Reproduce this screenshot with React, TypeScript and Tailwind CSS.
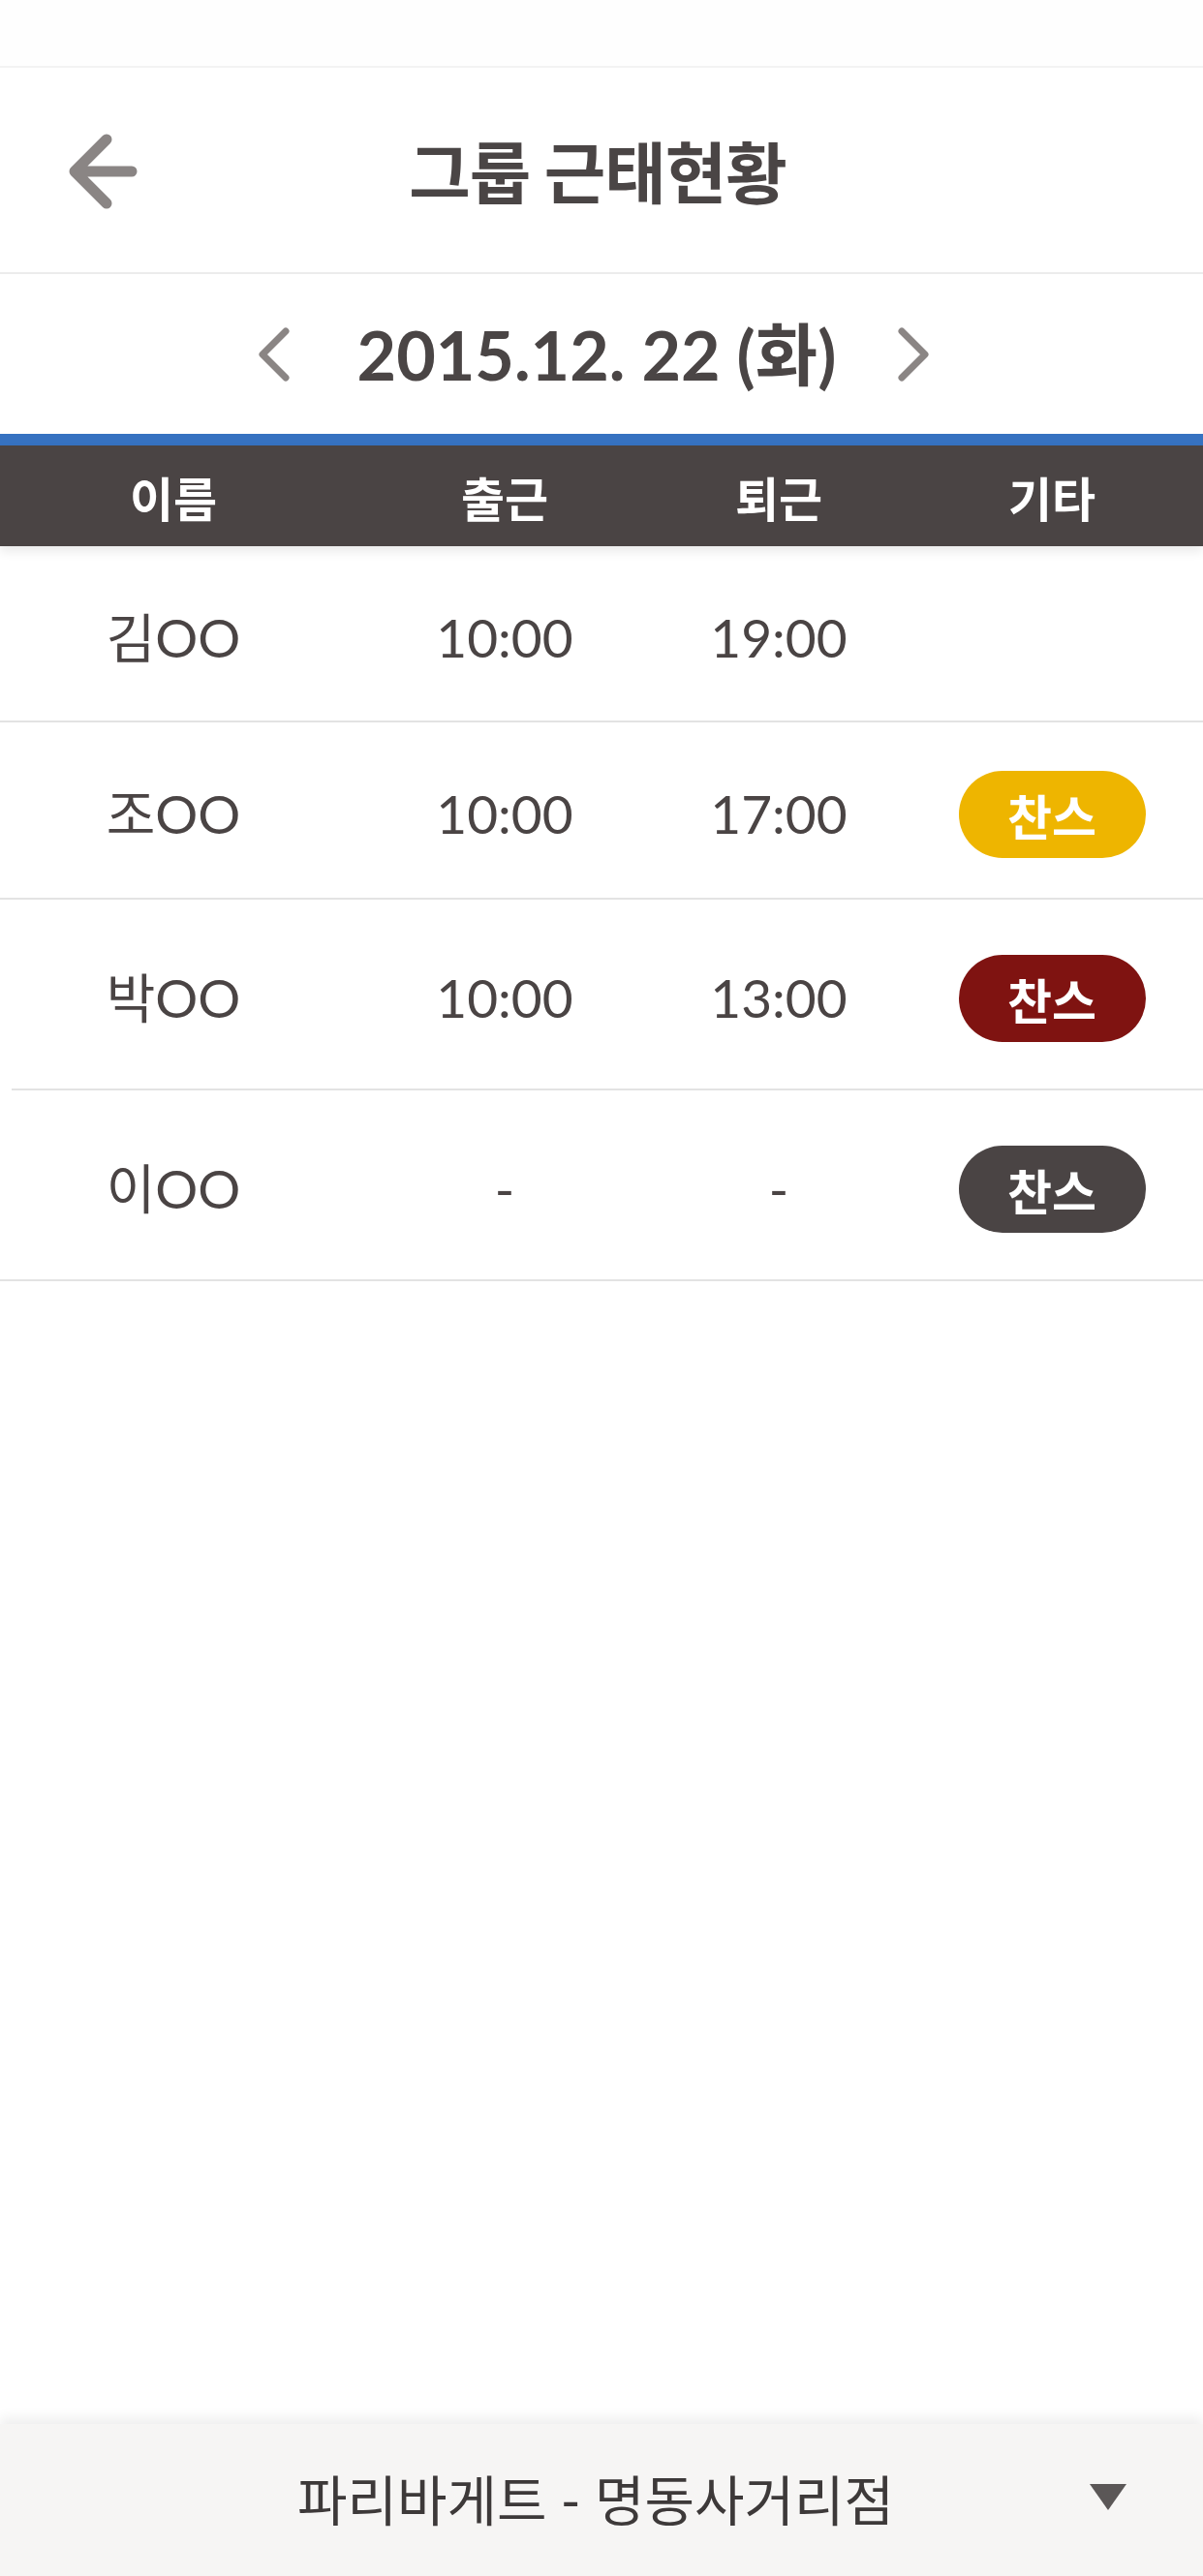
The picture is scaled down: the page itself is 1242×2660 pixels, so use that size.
import React from "react";

type Row = {
  name: string;
  inTime: string;
  outTime: string;
  badge?: string;
  height: string;
  divider: string;
};

const rows: Row[] = [
  { name: "김OO", inTime: "10:00", outTime: "19:00", height: "h-[180px]", divider: "" },
  { name: "조OO", inTime: "10:00", outTime: "17:00", badge: "bg-[#eeb500]", height: "h-[181px]", divider: "" },
  { name: "박OO", inTime: "10:00", outTime: "13:00", badge: "bg-[#7f1311]", height: "h-[195px]", divider: "ml-[12px]" },
  { name: "이OO", inTime: "-", outTime: "-", badge: "bg-[#4a4444]", height: "h-[195px]", divider: "" },
];

const cols = "grid grid-cols-[358px_326px_240px_318px] items-center";

function BackArrow() {
  return (
    <svg width="72" height="78" viewBox="0 0 72 78" fill="none">
      <path
        d="M40 6 L7 39 L40 72 M7 39 H66"
        stroke="#8a8584"
        strokeWidth="11"
        strokeLinecap="round"
        strokeLinejoin="round"
      />
    </svg>
  );
}

function Chevron({ dir }: { dir: "left" | "right" }) {
  return (
    <svg width="38" height="56" viewBox="0 0 38 56" fill="none">
      <path
        d={dir === "left" ? "M31 4 L7 28 L31 52" : "M7 4 L31 28 L7 52"}
        stroke="#8a8584"
        strokeWidth="7"
        strokeLinecap="round"
        strokeLinejoin="round"
      />
    </svg>
  );
}

export default function App() {
  return (
    <div className="w-[1242px] h-[2660px] flex flex-col bg-white font-[family-name:Lato,'Noto_Sans_CJK_KR',sans-serif] text-[#4a4545]">
      {/* status bar */}
      <div className="h-[70px] shrink-0 border-b-2 border-[#f3f3f3] bg-[#fefefe]" />

      {/* title bar */}
      <div className="h-[213px] shrink-0 grid grid-cols-[1fr_auto_1fr] items-center border-b-2 border-[#ececec]">
        <div className="pl-[70px] pt-[2px]">
          <BackArrow />
        </div>
        <h1 className="text-[69px] font-bold leading-none tracking-[-1px] text-[#4a4545] font-[family-name:'Noto_Sans_CJK_KR',sans-serif] -translate-x-[4px]">
          그룹 근태현황
        </h1>
        <div />
      </div>

      {/* date picker */}
      <div className="h-[165px] shrink-0 flex items-center justify-center pr-[16px]">
        <Chevron dir="left" />
        <span className="ml-[67px] mr-[61px] text-[70px] font-bold leading-none">2015.12. 22 (화)</span>
        <Chevron dir="right" />
      </div>

      {/* table header */}
      <div className="h-[12px] shrink-0 bg-[#3672c1]" />
      <div className={`${cols} h-[104px] shrink-0 bg-[#4a4444] text-white text-[49px] font-bold leading-none shadow-[0_6px_10px_rgba(0,0,0,0.08)] relative z-10 font-[family-name:'Noto_Sans_CJK_KR',sans-serif]`}>
        <span className="text-center">이름</span>
        <span className="text-center">출근</span>
        <span className="text-center">퇴근</span>
        <span className="text-center pl-[6px]">기타</span>
      </div>

      {/* rows */}
      {rows.map((r) => (
        <React.Fragment key={r.name}>
          <div
            className={`${cols} ${r.height} shrink-0 text-[55px] leading-none text-[#4a4444] pt-[8px]`}
          >
            <span className="text-center">{r.name}</span>
            <span className="text-center">{r.inTime}</span>
            <span className="text-center">{r.outTime}</span>
            <div className="flex justify-center pl-[6px]">
              {r.badge && (
                <span
                  className={`${r.badge} w-[193px] h-[90px] rounded-full flex items-center justify-center text-white text-[50px] font-bold leading-none font-[family-name:'Noto_Sans_CJK_KR',sans-serif]`}
                >
                  찬스
                </span>
              )}
            </div>
          </div>
          <div className={`h-[2px] shrink-0 bg-[#e3e3e3] ${r.divider}`} />
        </React.Fragment>
      ))}

      <div className="flex-1" />

      {/* store selector */}
      <div className="h-[157px] shrink-0 bg-[#f6f5f4] shadow-[0_-6px_12px_rgba(0,0,0,0.07)] flex items-center justify-center relative">
        <span className="text-[56px] leading-none text-[#3d3939] -translate-x-[6px]">
          파리바게트 - 명동사거리점
        </span>
        <svg
          className="absolute right-[79px] top-[62px]"
          width="38"
          height="27"
          viewBox="0 0 38 27"
        >
          <polygon points="0,0 38,0 19,27" fill="#5b5757" />
        </svg>
      </div>
    </div>
  );
}
